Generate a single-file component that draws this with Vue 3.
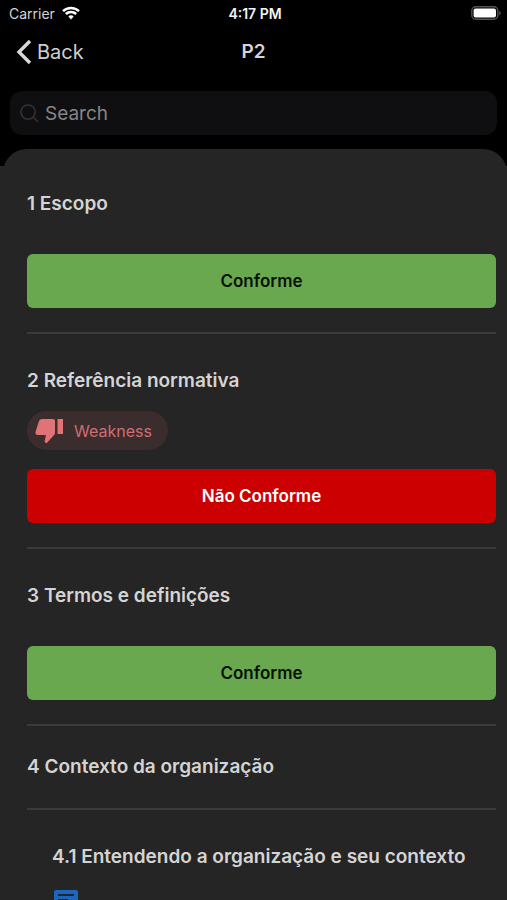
<script setup>
import { ref } from 'vue'

const query = ref('')

const clauses = [
  { id: '1', title: '1 Escopo', status: 'Conforme', tone: 'ok' },
  { id: '2', title: '2 Referência normativa', tag: 'Weakness', status: 'Não Conforme', tone: 'bad' },
  { id: '3', title: '3 Termos e definições', status: 'Conforme', tone: 'ok' },
  { id: '4', title: '4 Contexto da organização' },
  { id: '4.1', title: '4.1 Entendendo a organização e seu contexto', nested: true, note: true }
]
</script>

<template>
  <div class="page">
    <header class="top">
      <div class="status">
        <div class="carrier">
          <span>Carrier</span>
          <svg class="wifi" viewBox="0 0 18 14" aria-hidden="true">
            <path d="M1 5.2a11.6 11.6 0 0 1 16 0" />
            <path d="M3.8 8a7.6 7.6 0 0 1 10.4 0" />
            <path class="dot" d="M9 13.6l-2.7-3a4 4 0 0 1 5.4 0z" />
          </svg>
        </div>
        <time class="clock">4:17 PM</time>
        <svg class="battery" viewBox="0 0 30 14" aria-label="Battery full" role="img">
          <rect class="shell" x="0.800" y="0.800" width="26" height="12.400" rx="4" />
          <rect class="charge" x="2.600" y="2.400" width="22.400" height="9.200" rx="2" />
          <path class="tip" d="M28.4 5v4.4c1.6-.6 1.6-3.8 0-4.4z" />
        </svg>
      </div>
      <nav class="nav">
        <a class="back" href="#">
          <svg viewBox="0 0 16 26" aria-hidden="true"><path d="M14 2L3 13l11 11" /></svg>
          <span>Back</span>
        </a>
        <h1>P2</h1>
      </nav>
      <label class="search">
        <svg viewBox="0 0 20 20" aria-hidden="true">
          <circle cx="8.5" cy="8.5" r="7.5" />
          <path d="M14 14l5 5" />
        </svg>
        <input v-model="query" type="search" placeholder="Search" aria-label="Search" />
      </label>
    </header>

    <main class="sheet">
      <section
        v-for="c in clauses"
        :key="c.id"
        class="clause"
        :class="{ group: !c.status && !c.nested, nested: c.nested }"
      >
        <h2>{{ c.title }}</h2>
        <div v-if="c.tag" class="tag">
          <svg viewBox="0 0 28 26" aria-hidden="true">
            <path d="M7 1h11q2 0 2 2v12q0 1-.7 1.8L12.3 24.5q-1 1-2 0-.8-.8-.6-1.8L11 17H3q-3 0-2.5-3L4 3q.8-2 3-2z" />
            <path d="M22.5 1H28v15h-5.5z" />
          </svg>
          <span>{{ c.tag }}</span>
        </div>
        <button v-if="c.status" type="button" class="verdict" :class="[c.tone, { tagged: c.tag }]">
          {{ c.status }}
        </button>
        <button v-if="c.note" type="button" class="note" aria-label="Comment">
          <svg viewBox="0 0 28 26" aria-hidden="true">
            <path class="bubble" d="M4 0h20q2 0 2 2v16q0 2-2 2H7l-5 5V2q0-2 2-2z" />
            <path class="lines" d="M6 5h16M6 10h10M6 15h16" />
          </svg>
        </button>
      </section>
    </main>
  </div>
</template>

<style>
body {
  background: #252525;
}
</style>

<style scoped>
.page {
  display: flex;
  flex-direction: column;
  height: 100vh;
  background: #252525;
  color: #d4d4d4;
  font-family: Inter, "Liberation Sans", sans-serif;
}

.top {
  flex: none;
  padding-bottom: 31px;
  background: #000;
}

.status {
  display: grid;
  grid-template-columns: 1fr auto 1fr;
  align-items: center;
  height: 26px;
  padding: 0 6px 0 9px;
  font-size: 14px;
}

.carrier {
  display: flex;
  align-items: center;
  gap: 7px;
}

.wifi {
  width: 18px;
  height: 14px;
  fill: none;
  stroke: #fff;
  stroke-width: 2.4;
}

.wifi .dot {
  fill: #fff;
  stroke: none;
}

.clock {
  color: #f4f4f4;
  font-weight: 600;
}

.battery {
  justify-self: end;
  width: 30px;
  height: 14px;
}

.shell {
  fill: none;
  stroke: #555;
  stroke-width: 1.4;
}

.charge {
  fill: #fff;
}

.tip {
  fill: #666;
}

.nav {
  display: grid;
  grid-template-columns: 1fr auto 1fr;
  align-items: center;
  height: 52px;
  padding: 0 16px;
}

.back {
  display: flex;
  align-items: center;
  gap: 5px;
  color: #cfcfcf;
  font-size: 20px;
  text-decoration: none;
}

.back svg {
  width: 16px;
  height: 26px;
  fill: none;
  stroke: #d8d8d8;
  stroke-width: 3.4;
}

h1 {
  margin: 0;
  font-size: 19px;
  font-weight: 600;
  line-height: 24px;
}

.search {
  display: flex;
  align-items: center;
  gap: 6px;
  height: 44px;
  margin: 13px 10px 0;
  padding: 0 10px;
  border-radius: 12px;
  background: #0f0f11;
}

.search svg {
  flex: none;
  width: 19px;
  height: 19px;
  fill: none;
  stroke: #343436;
  stroke-width: 1.6;
}

.search input {
  flex: 1;
  min-width: 0;
  padding: 0;
  border: 0;
  outline: 0;
  background: transparent;
  color: #d4d4d4;
  font: inherit;
  font-size: 19px;
}

.search input::placeholder {
  color: #858587;
  opacity: 1;
}

.sheet {
  flex: 1;
  min-height: 0;
  margin: -17px 0 0 3px;
  padding: 8px 11px 0 24px;
  border-radius: 24px 24px 0 0;
  background: #252525;
  overflow-y: auto;
  scrollbar-width: none;
}

.clause {
  padding: 35px 0 24px;
  border-bottom: 2px solid #3a3a3a;
}

.clause.group {
  padding: 29px 0;
}

.clause.nested {
  padding-left: 25px;
}

h2 {
  margin: 0;
  font-size: 19px;
  font-weight: 600;
  line-height: 24px;
}

.tag {
  display: flex;
  align-items: center;
  gap: 11px;
  width: fit-content;
  height: 39px;
  margin-top: 18px;
  padding: 0 16px 0 8px;
  border-radius: 20px;
  background: #3b2c2d;
  color: #d06e71;
  font-size: 16px;
}

.tag svg {
  width: 28px;
  height: 26px;
  fill: #df7376;
}

.verdict {
  display: block;
  width: 100%;
  height: 54px;
  margin-top: 38px;
  border: 0;
  border-radius: 6px;
  font: inherit;
  font-size: 17px;
  font-weight: 600;
}

.verdict.tagged {
  margin-top: 19px;
}

.ok {
  background: #6aa84f;
  color: #071104;
}

.bad {
  background: #cc0000;
  color: #fff;
}

.note {
  display: block;
  margin-top: 21px;
  padding: 0;
  border: 0;
  background: transparent;
}

.note svg {
  display: block;
  width: 28px;
  height: 26px;
}

.bubble {
  fill: #1a66c0;
}

.lines {
  fill: none;
  stroke: #252525;
  stroke-width: 2;
}
</style>
